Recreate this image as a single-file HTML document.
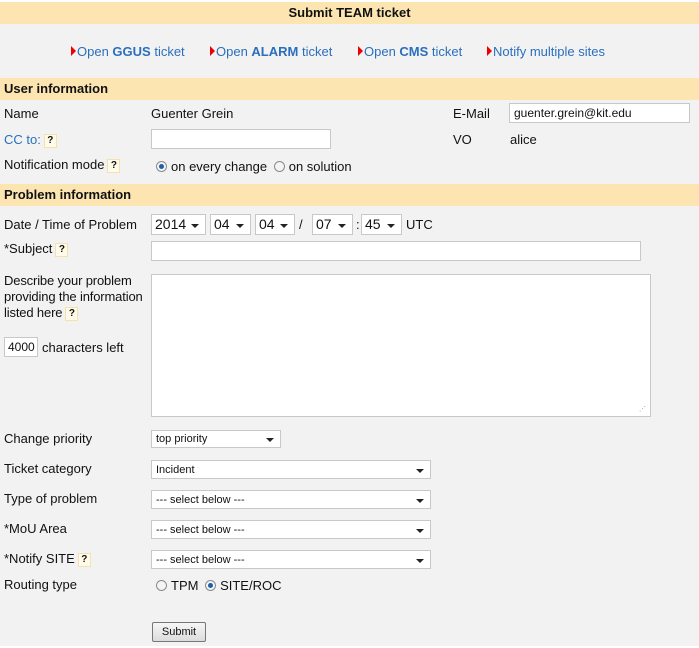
<!DOCTYPE html>
<html><head><style>
body{margin:0;width:699px;height:648px;background:#fff;font-family:"Liberation Sans",Arial,sans-serif;font-size:13px;color:#111;position:relative;overflow:hidden}
#pg{position:absolute;left:0;top:2px;width:699px;height:644px;background:#f2f2f2}
.a{position:absolute;white-space:nowrap}
.bar{position:absolute;left:0;width:699px;height:22px;background:#fde5b2;font-weight:bold;font-size:13px}
.q{display:inline-block;width:11px;height:12px;background:#fffbe8;border:1px solid #f3e2b0;font-size:10px;font-weight:bold;line-height:12px;text-align:center;vertical-align:1px;margin-left:3px}
.lnk{color:#2a6fbd;font-size:13px}
.lnk b{font-weight:bold}
.tri{display:inline-block;width:0;height:0;border-top:5px solid transparent;border-bottom:5px solid transparent;border-left:5px solid #e00;margin-right:1px;vertical-align:0}
.box{position:absolute;background:#fff;border:1px solid #c8c8c8;box-sizing:border-box;font-size:12px;line-height:18px;padding-left:4px;white-space:nowrap}
.sel::after{content:"";position:absolute;right:6px;top:50%;margin-top:-1px;border-left:4px solid transparent;border-right:4px solid transparent;border-top:4px solid #222}
.big{font-size:14px;line-height:19px;padding-left:3px}
.sm{font-size:11px;line-height:17px;padding-top:1px}
.rad{display:inline-block;width:11px;height:11px;border-radius:50%;border:1px solid #8a8a8a;background:#f4f4f4;box-sizing:border-box;vertical-align:-1px;margin-right:4px;position:relative}
.rad.on::after{content:"";position:absolute;left:2px;top:2px;width:5px;height:5px;border-radius:50%;background:#1d5fa8}
</style></head><body>
<div id="pg"></div>
<div class="bar" style="top:2px;text-align:center;line-height:22px">Submit TEAM ticket</div>
<div class="a lnk" style="left:71px;top:44px"><span class="tri"></span>Open <b>GGUS</b> ticket</div>
<div class="a lnk" style="left:210px;top:44px"><span class="tri"></span>Open <b>ALARM</b> ticket</div>
<div class="a lnk" style="left:358px;top:44px"><span class="tri"></span>Open <b>CMS</b> ticket</div>
<div class="a lnk" style="left:487px;top:44px"><span class="tri"></span>Notify multiple sites</div>
<div class="bar" style="top:78px;line-height:22px;padding-left:4px;box-sizing:border-box">User information</div>
<div class="a" style="left:4px;top:106px">Name</div>
<div class="a" style="left:151px;top:106px">Guenter Grein</div>
<div class="a" style="left:453px;top:106px">E-Mail</div>
<div class="box" style="left:509px;top:103px;width:181px;height:20px">guenter.grein@kit.edu</div>
<div class="a" style="left:4px;top:132px;color:#2a6fbd">CC to:<span class="q" style="color:#111">?</span></div>
<div class="box" style="left:151px;top:129px;width:180px;height:20px"></div>
<div class="a" style="left:453px;top:132px">VO</div>
<div class="a" style="left:510px;top:132px">alice</div>
<div class="a" style="left:4px;top:157px">Notification mode<span class="q">?</span></div>
<div class="a" style="left:156px;top:159px"><span class="rad on"></span>on every change <span class="rad" style="margin-left:3px"></span>on solution</div>
<div class="bar" style="top:184px;line-height:22px;padding-left:4px;box-sizing:border-box">Problem information</div>
<div class="a" style="left:4px;top:217px">Date / Time of Problem</div>
<div class="box sel big" style="left:151px;top:214px;width:55px;height:21px">2014</div>
<div class="box sel big" style="left:210px;top:214px;width:41px;height:21px">04</div>
<div class="box sel big" style="left:255px;top:214px;width:40px;height:21px">04</div>
<div class="a" style="left:299px;top:217px">/</div>
<div class="box sel big" style="left:312px;top:214px;width:41px;height:21px">07</div>
<div class="a" style="left:356px;top:217px">:</div>
<div class="box sel big" style="left:361px;top:214px;width:41px;height:21px">45</div>
<div class="a" style="left:406px;top:217px">UTC</div>
<div class="a" style="left:4px;top:241px">*Subject<span class="q">?</span></div>
<div class="box" style="left:151px;top:241px;width:490px;height:20px"></div>
<div class="a" style="left:4px;top:273px;line-height:16px;letter-spacing:-0.15px">Describe your problem<br>providing the information<br>listed here<span class="q">?</span></div>
<div class="box" style="left:4px;top:337px;width:34px;height:20px;padding-left:3px;font-size:12px">4000</div>
<div class="a" style="left:42px;top:340px">characters left</div>
<div class="box" style="left:151px;top:274px;width:500px;height:143px"><span style="position:absolute;right:4px;bottom:3px;font-size:7px;color:#999;line-height:7px">⋰</span></div>
<div class="a" style="left:4px;top:431px">Change priority</div>
<div class="box sel sm" style="left:151px;top:430px;width:130px;height:18px;line-height:15px">top priority</div>
<div class="a" style="left:4px;top:461px">Ticket category</div>
<div class="box sel sm" style="left:151px;top:460px;width:280px;height:19px">Incident</div>
<div class="a" style="left:4px;top:491px">Type of problem</div>
<div class="box sel sm" style="left:151px;top:490px;width:280px;height:19px">--- select below ---</div>
<div class="a" style="left:4px;top:521px">*MoU Area</div>
<div class="box sel sm" style="left:151px;top:520px;width:280px;height:19px">--- select below ---</div>
<div class="a" style="left:4px;top:551px">*Notify SITE<span class="q">?</span></div>
<div class="box sel sm" style="left:151px;top:550px;width:280px;height:19px">--- select below ---</div>
<div class="a" style="left:4px;top:577px">Routing type</div>
<div class="a" style="left:156px;top:578px"><span class="rad"></span>TPM <span class="rad on" style="margin-left:3px"></span>SITE/ROC</div>
<div class="box" style="left:152px;top:622px;width:54px;height:20px;border:1px solid #777;border-radius:2px;background:linear-gradient(#f6f6f6,#dcdcdc);text-align:center;padding:0;font-size:11px;line-height:18px">Submit</div>
</body></html>
